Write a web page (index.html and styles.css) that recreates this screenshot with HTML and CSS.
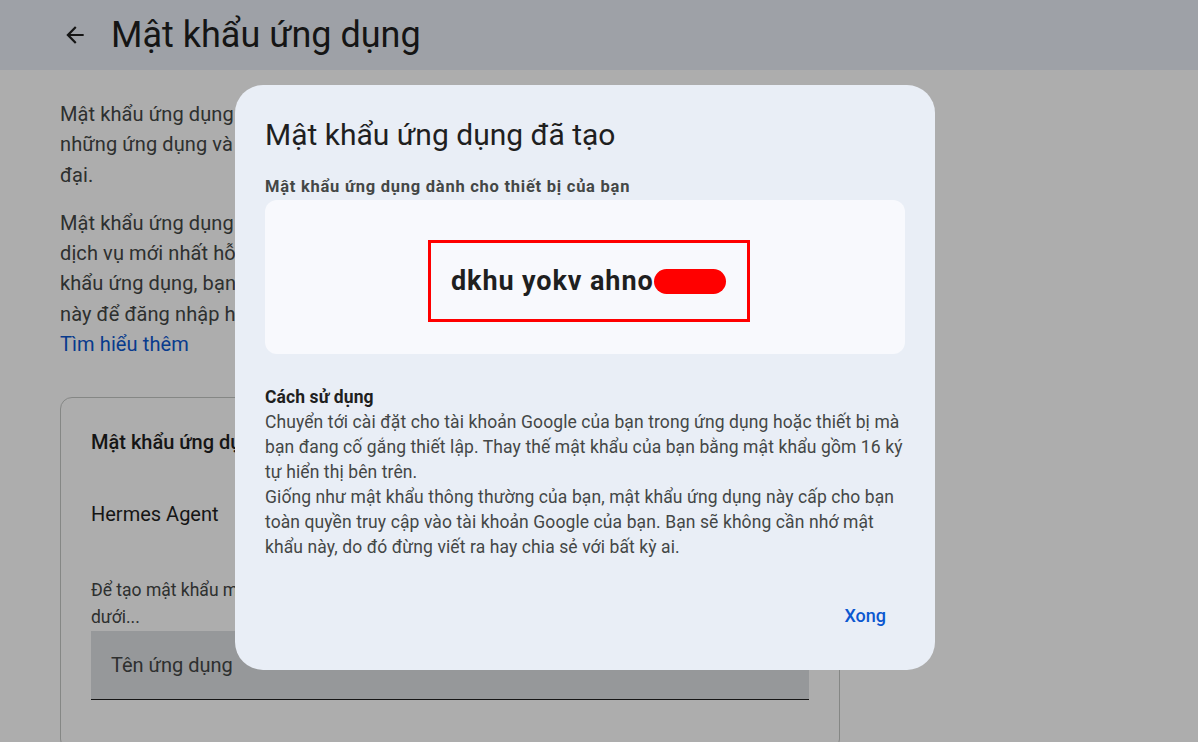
FILE: index.html
```html
<!DOCTYPE html>
<html lang="vi">
<head>
    <meta charset="utf-8">
    <title>Mật khẩu ứng dụng</title>
    <link rel="stylesheet" href="styles.css">
</head>
<body>
    <header class="topbar">
        <svg class="back" width="26" height="26" viewBox="0 0 24 24"><path d="M20 11H7.83l5.59-5.59L12 4l-8 8 8 8 1.41-1.41L7.83 13H20v-2z" fill="#1f1f1f"/></svg>
        <h1>Mật khẩu ứng dụng</h1>
    </header>

    <main class="page">
        <p class="intro">Mật khẩu ứng dụng giúp bạn đăng nhập vào Tài khoản Google của mình trên<br>những ứng dụng và dịch vụ cũ hơn không hỗ trợ các tiêu chuẩn bảo mật hiện<br>đại.</p>
        <p class="intro">Mật khẩu ứng dụng kém an toàn hơn so với việc dùng các ứng dụng và<br>dịch vụ mới nhất hỗ trợ tiêu chuẩn bảo mật hiện đại. Trước khi tạo mật<br>khẩu ứng dụng, bạn nên kiểm tra xem ứng dụng của mình có cần mật khẩu<br>này để đăng nhập hay không.<br><a href="#" class="link">Tìm hiểu thêm</a></p>

        <section class="card">
            <h2>Mật khẩu ứng dụng của bạn</h2>
            <div class="app-row">Hermes Agent</div>
            <p class="hint">Để tạo mật khẩu mới dành riêng cho ứng dụng, hãy nhập tên ứng dụng bên<br>dưới...</p>
            <div class="field">Tên ứng dụng</div>
        </section>
    </main>

    <div class="scrim"></div>

    <div class="dialog">
        <h3>Mật khẩu ứng dụng đã tạo</h3>
        <div class="label">Mật khẩu ứng dụng dành cho thiết bị của bạn</div>
        <div class="pw-box">
            <div class="pw-mark">
                <span class="pw">dkhu yokv ahno</span><span class="redact"></span>
            </div>
        </div>

        <div class="usage">
            <strong>Cách sử dụng</strong>
            <p>Chuyển tới cài đặt cho tài khoản Google của bạn trong ứng dụng hoặc thiết bị mà bạn đang cố gắng thiết lập. Thay thế mật khẩu của bạn bằng mật khẩu gồm 16 ký tự hiển thị bên trên.</p>
            <p>Giống như mật khẩu thông thường của bạn, mật khẩu ứng dụng này cấp cho bạn toàn quyền truy cập vào tài khoản Google của bạn. Bạn sẽ không cần nhớ mật khẩu này, do đó đừng viết ra hay chia sẻ với bất kỳ ai.</p>
        </div>

        <div class="actions">
            <button class="btn-text">Xong</button>
        </div>
    </div>
</body>
</html>
```

FILE: styles.css
```css
body {
    font-family: Roboto, "Noto Sans", sans-serif;
    background-color: #fff;
    color: #1f1f1f;
    margin: 0;
    padding: 0;
    overflow: hidden;
}
.topbar {
    height: 70px;
    background-color: #e9eef6;
    display: flex;
    align-items: center;
    padding-left: 62px;
    gap: 23px;
}
.topbar h1 {
    margin: 0;
    font-size: 36px;
    font-weight: 400;
}
.page {
    padding: 29px 60px 0;
    width: 780px;
}
.intro {
    font-size: 20px;
    letter-spacing: 0.1px;
    line-height: 30.3px;
    color: #444746;
    margin: 0 0 18px;
    white-space: nowrap;
}
.link {
    color: #0b57d0;
    text-decoration: none;
}
.card {
    margin-top: 38px;
    border: 1px solid #c4c7c5;
    border-radius: 12px;
    padding: 30px 30px 50px;
}
.card h2 {
    margin: 0;
    font-size: 20px;
    font-weight: 500;
    line-height: 28px;
}
.app-row {
    font-size: 20px;
    line-height: 28px;
    margin-top: 44px;
}
.hint {
    margin: 49px 0 0;
    font-size: 17.5px;
    line-height: 27px;
    color: #444746;
    white-space: nowrap;
}
.field {
    height: 68px;
    background-color: #dde0e4;
    border-bottom: 1px solid #1f1f1f;
    font-size: 20px;
    color: #444746;
    display: flex;
    align-items: center;
    padding-left: 20px;
}
.scrim {
    position: fixed;
    inset: 0;
    background-color: rgba(0, 0, 0, 0.32);
}
.dialog {
    position: fixed;
    left: 235px;
    top: 85px;
    width: 640px;
    height: 553px;
    padding: 32px 30px 0;
    background-color: #e9eef6;
    border-radius: 28px;
}
.dialog h3 {
    margin: 0;
    font-size: 30px;
    font-weight: 400;
    line-height: 36px;
}
.label {
    margin-top: 24px;
    font-size: 16.5px;
    font-weight: 700;
    letter-spacing: 0.75px;
    line-height: 20px;
    color: #444746;
}
.pw-box {
    margin-top: 3px;
    height: 154px;
    background-color: #f8f9fd;
    border-radius: 12px;
    display: flex;
    justify-content: center;
    align-items: center;
}
.pw-mark {
    display: flex;
    align-items: center;
    width: 276px;
    height: 76px;
    padding-left: 20px;
    padding-right: 20px;
    border: 3px solid #ff0000;
    margin-left: 8px;
    margin-top: 8px;
}
.pw {
    font-size: 27px;
    font-weight: 700;
    letter-spacing: 0.9px;
    color: #1f1f1f;
}
.redact {
    width: 72px;
    height: 25px;
    border-radius: 13px;
    background-color: #ff0000;
}
.usage {
    margin-top: 31px;
    font-size: 17.5px;
    letter-spacing: 0.1px;
    line-height: 25px;
    color: #444746;
}
.usage strong {
    display: block;
    font-weight: 700;
    color: #1f1f1f;
}
.usage p {
    margin: 0;
}
.actions {
    display: flex;
    justify-content: flex-end;
    margin-top: 35px;
}
.btn-text {
    background: none;
    border: none;
    font-family: inherit;
    font-size: 18px;
    font-weight: 500;
    color: #0b57d0;
    padding: 10px 19px;
    cursor: pointer;
}
```
